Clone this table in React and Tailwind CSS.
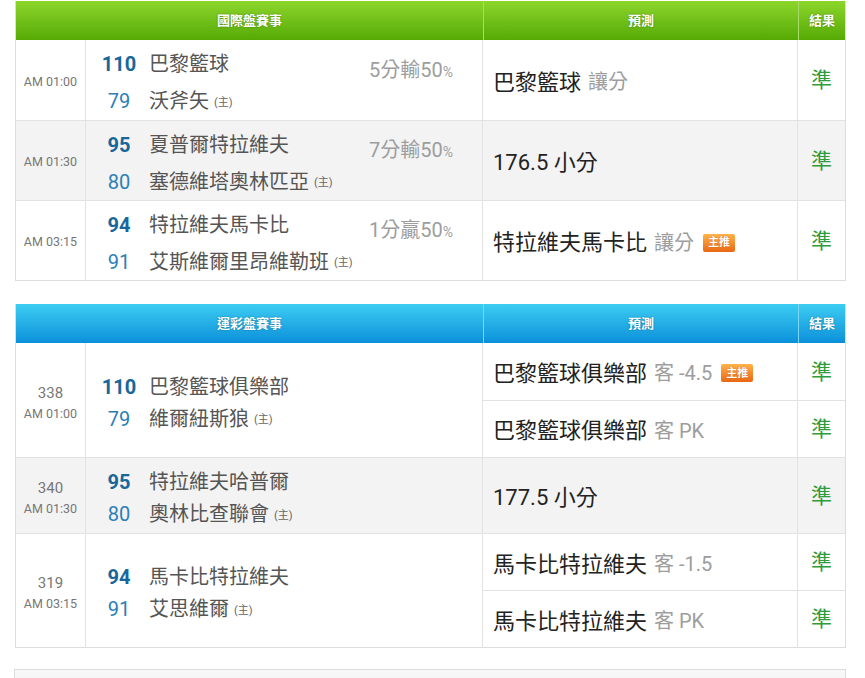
import React from "react";

const FONT = { fontFamily: "Roboto, 'Noto Sans CJK TC', 'Noto Sans', sans-serif" };

const intl = [
  {
    time: "AM 01:00",
    teams: [
      { score: "110", name: "巴黎籃球", win: true },
      { score: "79", name: "沃斧矢", home: true },
    ],
    odds: ["5分輸50", "%"],
    preds: [{ team: "巴黎籃球", tip: "讓分" }],
  },
  {
    time: "AM 01:30",
    gray: true,
    teams: [
      { score: "95", name: "夏普爾特拉維夫", win: true },
      { score: "80", name: "塞德維塔奧林匹亞", home: true },
    ],
    odds: ["7分輸50", "%"],
    preds: [{ team: "176.5 小分", tip: "" }],
  },
  {
    time: "AM 03:15",
    teams: [
      { score: "94", name: "特拉維夫馬卡比", win: true },
      { score: "91", name: "艾斯維爾里昂維勒班", home: true },
    ],
    odds: ["1分贏50", "%"],
    preds: [{ team: "特拉維夫馬卡比", tip: "讓分", badge: true }],
  },
];

const lottery = [
  {
    no: "338",
    time: "AM 01:00",
    h: "h-[114px]",
    teams: [
      { score: "110", name: "巴黎籃球俱樂部", win: true },
      { score: "79", name: "維爾紐斯狼", home: true },
    ],
    preds: [
      { team: "巴黎籃球俱樂部", tip: "客 -4.5", badge: true },
      { team: "巴黎籃球俱樂部", tip: "客 PK" },
    ],
  },
  {
    no: "340",
    time: "AM 01:30",
    h: "h-[76px]",
    gray: true,
    teams: [
      { score: "95", name: "特拉維夫哈普爾", win: true },
      { score: "80", name: "奧林比查聯會", home: true },
    ],
    preds: [{ team: "177.5 小分", tip: "" }],
  },
  {
    no: "319",
    time: "AM 03:15",
    h: "h-[114px]",
    teams: [
      { score: "94", name: "馬卡比特拉維夫", win: true },
      { score: "91", name: "艾思維爾", home: true },
    ],
    preds: [
      { team: "馬卡比特拉維夫", tip: "客 -1.5" },
      { team: "馬卡比特拉維夫", tip: "客 PK" },
    ],
  },
];

const Badge = () => (
  <span className="ml-[9px] inline-flex h-[18px] w-[32px] items-center justify-center rounded-[2px] bg-gradient-to-b from-[#ffb347] to-[#e8660f] text-[11px] font-bold leading-none text-white [text-shadow:0_0_1px_#b34700]">
    主推
  </span>
);

const Header = ({ title, tone }) => {
  const bg =
    tone === "green"
      ? "bg-gradient-to-b from-[#8dd62a] to-[#55aa03] border-[#a6dd6a]"
      : "bg-gradient-to-b from-[#3ccdf2] to-[#0a90da] border-[#7ad6f5]";
  return (
    <div className={"flex h-[39px] text-[13px] font-bold text-white [text-shadow:0_0_2px_rgba(0,0,0,0.35)] " + bg}>
      <div className="flex w-[467px] items-center justify-center">{title}</div>
      <div className={"flex flex-1 items-center justify-center border-l " + bg}>預測</div>
      <div className={"flex w-[47px] items-center justify-center border-l " + bg}>結果</div>
    </div>
  );
};

const Teams = ({ teams, lineH }) => (
  <div className="flex flex-col">
    {teams.map((t) => (
      <div key={t.name} className={"flex items-center " + lineH}>
        <span
          className={
            "w-[40px] text-center text-[20px] " +
            (t.win ? "font-bold text-[#17679a]" : "text-[#2a80b6]")
          }
        >
          {t.score}
        </span>
        <span className="ml-[10px] text-[20px] text-[#555]">{t.name}</span>
        {t.home && <span className="ml-[5px] mt-[4px] text-[11px] text-[#666]">(主)</span>}
      </div>
    ))}
  </div>
);

const Row = ({ row, first, h, lineH }) => (
  <div className={"flex " + h + (first ? "" : " border-t border-[#e2e2e2]") + (row.gray ? " bg-[#f3f3f3]" : " bg-white")}>
    <div className="flex w-[70px] flex-col items-center justify-center border-r border-[#e2e2e2] pt-[4px]">
      {row.no && <span className="text-[15px] leading-[24px] text-[#777]">{row.no}</span>}
      <span className="text-[12.5px] text-[#777]">{row.time}</span>
    </div>
    <div className="flex w-[397px] items-center border-r border-[#e2e2e2] pl-[13px] pr-[29px] pt-[5px]">
      <Teams teams={row.teams} lineH={lineH} />
      {row.odds && (
        <span className="mb-[26px] ml-auto text-[20px] text-[#9d9d9d]">
          {row.odds[0]}
          <span className="text-[14px]">{row.odds[1]}</span>
        </span>
      )}
    </div>
    <div className="flex flex-1 flex-col">
      {row.preds.map((p, i) => (
        <div key={i} className={"flex flex-1" + (i ? " border-t border-[#e2e2e2]" : "")}>
          <div className="flex flex-1 items-center border-r border-[#e2e2e2] pl-[10px] pt-[4px]">
            <span className="text-[22px] text-[#222]">{p.team}</span>
            {p.tip && <span className="ml-[7px] text-[20px] text-[#9d9d9d]">{p.tip}</span>}
            {p.badge && <Badge />}
          </div>
          <div className="flex w-[47px] items-center justify-center pt-[2px] text-[21px] text-[#2e9b3c]">準</div>
        </div>
      ))}
    </div>
  </div>
);

export default function App() {
  return (
    <div className="min-h-[678px] bg-white pt-[1px]" style={FONT}>
      <div className="ml-[15px] w-[831px] border-x border-b border-[#dcdcdc]">
        <Header title="國際盤賽事" tone="green" />
        {intl.map((row, i) => (
          <Row key={i} row={row} first={i === 0} h="h-[80px]" lineH="h-[37px]" />
        ))}
      </div>

      <div className="ml-[15px] mt-[23px] w-[831px] border-x border-b border-[#dcdcdc]">
        <Header title="運彩盤賽事" tone="blue" />
        {lottery.map((row, i) => (
          <Row key={i} row={row} first={i === 0} h={row.h} lineH="h-[32px]" />
        ))}
      </div>

      <div className="ml-[14px] mt-[21px] h-[40px] w-[832px] border border-[#dcdcdc] bg-gradient-to-b from-[#f8f8f8] to-[#efefef]" />
    </div>
  );
}
